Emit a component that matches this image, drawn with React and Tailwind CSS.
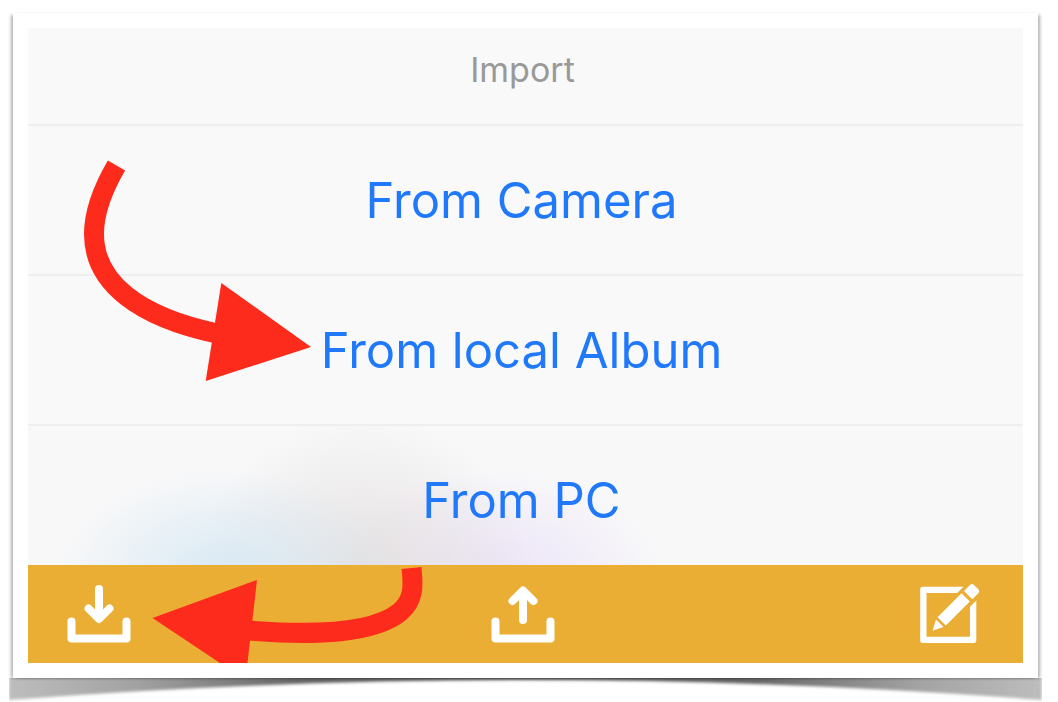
import React from 'react';

const options = [
  { label: 'From Camera', rowClass: 'h-[150px] bg-[#f9f9f9]' },
  { label: 'From local Album', rowClass: 'h-[150px] bg-[#f9f9f9]' },
  {
    label: 'From PC',
    rowClass:
      'h-[141px] bg-[#f8f8f9] bg-[radial-gradient(ellipse_170px_110px_at_200px_110%,#d6e8f3,transparent),radial-gradient(ellipse_170px_160px_at_335px_110%,#e3dfdf,transparent),radial-gradient(ellipse_170px_110px_at_465px_110%,#ebe2f8,transparent)]',
  },
];

const DownloadIcon = () => (
  <svg className="h-16 w-16" viewBox="67 583 64 64" fill="none" stroke="white" strokeWidth="8" strokeLinecap="round" strokeLinejoin="round">
    <path d="M71.5 621.5V638.5H126.5V621.5" />
    <path d="M99 589V618M88.5 608.5L99 619L109.5 608.5" />
  </svg>
);

const UploadIcon = () => (
  <svg className="h-16 w-16" viewBox="490 583 64 64" fill="none" stroke="white" strokeWidth="8" strokeLinecap="round" strokeLinejoin="round">
    <path d="M494.5 621.5V638.5H549.5V621.5" />
    <path d="M522 620V591M511.5 601L522 590.5L532.5 601" />
  </svg>
);

const EditIcon = () => (
  <svg className="h-16 w-15" viewBox="921 583 60 64" fill="white">
    <path d="M964.5 586.7H923.5Q921.2 586.7 921.2 589V640.7Q921.2 643 923.5 643H975Q977.3 643 977.3 640.7V600.5L971 606.8V636.8H927.5V593H958.2Z" />
    <path d="M971 585Q973 583.2 975 585L979.3 589.3Q981 591.2 979.3 593.2L973.3 599.2L965 591Z" />
    <path d="M962.5 593.2L970.8 601.5L946.8 625.5L938.5 617.2Z" />
    <path d="M937 619.5L944.5 627L933.5 630.7Z" />
  </svg>
);

const actions = [
  { label: 'Import', Icon: DownloadIcon, position: 'justify-self-start' },
  { label: 'Export', Icon: UploadIcon, position: 'justify-self-center' },
  { label: 'Edit', Icon: EditIcon, position: 'justify-self-end' },
];

// Red guide arrows drawn over the sheet and the toolbar
const GuideArrows = () => (
  <svg className="pointer-events-none absolute top-0 left-0 h-[635px] w-[420px]" viewBox="28 28 420 635" aria-hidden="true">
    <g fill="none" stroke="#fd2b1c" strokeWidth="20">
      <path d="M116.5 165.5C101 192 94 213 94 234C94 283 139 317 217 333.5" />
      <path d="M411.5 568C413.5 586 414 600 400 612C374 633 318 636 248 630.5" />
    </g>
    <g fill="#fd2b1c">
      <path d="M221.3 283L311 347L205.7 381Z" />
      <path d="M152.5 618L257 580L245.5 680Z" />
    </g>
  </svg>
);

// Curled paper shadow under the frame
const CurlShadow = () => (
  <svg className="-mx-1 block h-6 w-[calc(100%+8px)]" viewBox="0 0 1034 24" preserveAspectRatio="none" aria-hidden="true">
    <defs>
      <linearGradient id="curl" x1="0" x2="1" y1="0" y2="0">
        <stop offset="0" stopColor="#bdbdbd" />
        <stop offset="0.12" stopColor="#a3a3a3" />
        <stop offset="0.28" stopColor="#666666" />
        <stop offset="0.5" stopColor="#555555" />
        <stop offset="0.72" stopColor="#666666" />
        <stop offset="0.88" stopColor="#a3a3a3" />
        <stop offset="1" stopColor="#bdbdbd" />
      </linearGradient>
      <filter id="soften" x="-5%" y="-60%" width="110%" height="220%">
        <feGaussianBlur stdDeviation="1.5" />
      </filter>
    </defs>
    <path d="M0 -8H1034V22Q775 2 517 2Q259 2 0 22Z" fill="url(#curl)" filter="url(#soften)" />
  </svg>
);

const App = () => {
  return (
    <div className="min-h-screen overflow-hidden bg-white pt-[13px] pr-5 pl-[13px] font-[Inter,sans-serif]">
      <div className="relative bg-white p-[15px] shadow-[-3px_1px_3px_-1px_rgba(0,0,0,0.3),3px_1px_3px_-1px_rgba(0,0,0,0.3)]">
        <div className="relative overflow-hidden">
          <h1 className="flex h-24 items-center justify-center bg-[#f9f9f9] pr-1.5 pb-3.5 text-[34px] font-normal text-[#999999]">
            Import
          </h1>
          <ul>
            {options.map((option) => (
              <li key={option.label}>
                <button
                  type="button"
                  className={`flex w-full items-start justify-center border-t-2 border-[#eeeef0] pt-11 pr-2 text-[49px] leading-[62px] text-[#2079fb] ${option.rowClass}`}
                >
                  {option.label}
                </button>
              </li>
            ))}
          </ul>
          <nav className="grid h-[98px] grid-cols-3 items-center bg-[#ebae34] pt-0.5 pr-[43px] pl-[39px]">
            {actions.map(({ label, Icon, position }) => (
              <button key={label} type="button" aria-label={label} className={position}>
                <Icon />
              </button>
            ))}
          </nav>
          <GuideArrows />
        </div>
      </div>
      <CurlShadow />
    </div>
  );
};

export default App;
